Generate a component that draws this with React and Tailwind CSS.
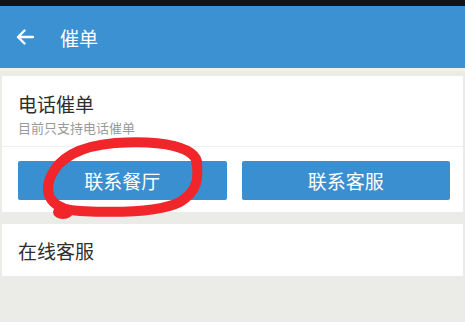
import React from "react";

const font = { fontFamily: '"Noto Sans CJK SC", "Noto Sans", sans-serif' };

export default function App() {
  return (
    <div className="relative w-[465px] h-[322px] overflow-hidden bg-[#ebebe8]" style={font}>
      <div className="h-[6px] bg-[#141414]" />
      <div className="h-[62px] bg-[#3b91d1] flex items-center">
        <svg width="18" height="16" viewBox="0 0 18 16" className="ml-[16px]">
          <path d="M17 8H2M8.5 1.5L2 8l6.5 6.5" fill="none" stroke="#fff" strokeWidth="2.4" strokeLinecap="round" strokeLinejoin="round" />
        </svg>
        <div className="ml-[26px] text-[19px] leading-none text-white">催单</div>
      </div>
      <div className="h-[3px] bg-[#f3f1e6]" />
      <div className="h-[5px]" />

      <div className="ml-[2px] mr-[2px] bg-white">
        <div className="pl-[16px] pt-[14px]">
          <div className="text-[19px] leading-[28px] text-[#2e2e2e]">电话催单</div>
          <div className="text-[13px] leading-[16px] text-[#9a9a9a] mt-[2px]">目前只支持电话催单</div>
        </div>
        <div className="mt-[10px] h-px bg-[#f0f0ee]" />
        <div className="grid grid-cols-2 gap-[15px] pl-[16px] pr-[13px] pt-[14px] pb-[12px]">
          <button className="h-[39px] bg-[#3a8fd0] rounded-[2px] text-white text-[19px] leading-none">联系餐厅</button>
          <button className="h-[39px] bg-[#3a8fd0] rounded-[2px] text-white text-[19px] leading-none">联系客服</button>
        </div>
      </div>

      <div className="h-[12px]" />

      <div className="ml-[2px] mr-[2px] bg-white h-[52px] flex items-center pl-[16px]">
        <div className="text-[19px] leading-none text-[#2e2e2e]">在线客服</div>
      </div>

      <svg className="absolute left-0 top-0 pointer-events-none" width="465" height="322" viewBox="0 0 465 322">
        <path
          d="M197 168 C 201 146, 160 140, 115 143 C 80 146, 58 158, 50 178 C 43 198, 55 210, 80 211 C 120 213, 160 212, 180 202 C 196 192, 200 180, 196 160"
          fill="none"
          stroke="#f0262b"
          strokeWidth="10"
          strokeLinecap="round"
        />
        <ellipse cx="63" cy="212" rx="10" ry="7" fill="#f0262b" />
      </svg>
    </div>
  );
}
